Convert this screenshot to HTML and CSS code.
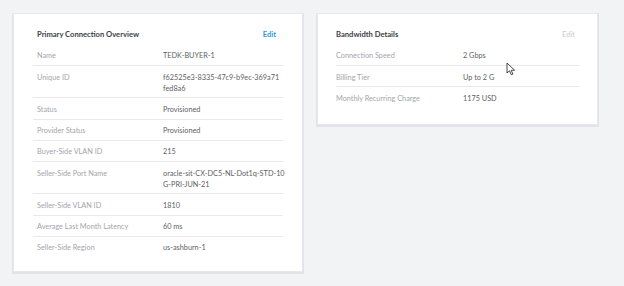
FILE: index.html
```html
<!DOCTYPE html>
<html lang="en">
<head>
    <meta charset="UTF-8">
    <title>Connection Details</title>
    <link rel="stylesheet" href="styles.css">
</head>
<body>
    <div class="cards">
        <div class="card card-primary">
            <div class="card-head">
                <h2>Primary Connection Overview</h2>
                <a href="#" class="edit">Edit</a>
            </div>
            <div class="row"><span class="label">Name</span><span class="value">TEDK-BUYER-1</span></div>
            <div class="row"><span class="label">Unique ID</span><span class="value">f62525e3-8335-47c9-b9ec-369a71 fed8a6</span></div>
            <div class="row"><span class="label">Status</span><span class="value">Provisioned</span></div>
            <div class="row"><span class="label">Provider Status</span><span class="value">Provisioned</span></div>
            <div class="row"><span class="label">Buyer-Side VLAN ID</span><span class="value">215</span></div>
            <div class="row"><span class="label">Seller-Side Port Name</span><span class="value break">oracle-sit-CX-DC5-NL-Dot1q-STD-10G-PRI-JUN-21</span></div>
            <div class="row"><span class="label">Seller-Side VLAN ID</span><span class="value">1810</span></div>
            <div class="row"><span class="label">Average Last Month Latency</span><span class="value">60 ms</span></div>
            <div class="row"><span class="label">Seller-Side Region</span><span class="value">us-ashburn-1</span></div>
        </div>

        <div class="card card-bandwidth">
            <div class="card-head">
                <h2>Bandwidth Details</h2>
                <span class="edit disabled">Edit</span>
            </div>
            <div class="row"><span class="label">Connection Speed</span><span class="value">2 Gbps</span></div>
            <div class="row"><span class="label">Billing Tier</span><span class="value">Up to 2 G</span></div>
            <div class="row"><span class="label">Monthly Recurring Charge</span><span class="value">1175 USD</span></div>
        </div>
    </div>

    <!-- mouse pointer caught in the screenshot -->
    <svg class="pointer" width="10" height="14" viewBox="0 0 10 14">
        <path d="M1 1 L1 11 L3.5 8.8 L5.3 12.8 L6.9 12.1 L5.2 8.3 L8.6 8.2 Z" fill="#fff" stroke="#333" stroke-width="0.9" stroke-linejoin="round"/>
    </svg>
</body>
</html>
```

FILE: styles.css
```css
* {
    margin: 0;
    padding: 0;
    box-sizing: border-box;
}
body {
    font-family: 'Lato', 'Liberation Sans', sans-serif;
    background: #f2f3f5;
    color: #5a5d62;
    width: 624px;
    height: 286px;
    overflow: hidden;
    position: relative;
    -webkit-font-smoothing: antialiased;
}
.cards {
    display: flex;
    align-items: flex-start;
    gap: 14px;
    padding: 13px 0 0 13px;
}
.card {
    background: #fff;
    border: 1px solid #e6e8ec;
    box-shadow: 0 1px 0 1px #e1e3e9;
    padding: 12px 19px 12px;
}
.card-primary {
    width: 290px;
    height: 259px;
}
.card-bandwidth {
    width: 281px;
    height: 112px;
    padding: 12px 18px 14px;
}
.card-head {
    display: flex;
    justify-content: space-between;
    align-items: center;
    height: 16px;
    margin-bottom: 2.75px;
    padding: 0 7px 0 4px;
}
.card-bandwidth .card-head {
    padding: 0 4px 0 0;
}
h2 {
    font-size: 7.6px;
    font-weight: 700;
    color: #3b3e44;
}
.edit {
    font-size: 7.6px;
    font-weight: 700;
    color: #2b9be3;
    text-decoration: none;
}
.edit.disabled {
    font-weight: 400;
    color: #c9cbcf;
}
.row {
    display: flex;
    font-size: 7.3px;
    line-height: 11px;
    padding: 5.5px 0 3.75px 4px;
    border-bottom: 1px solid #e8e9ec;
}
.row:last-child {
    border-bottom: none;
}
.card-bandwidth .row {
    padding-left: 0;
}
.label {
    width: 126px;
    flex-shrink: 0;
    color: #a3a6ab;
}
.card-bandwidth .label {
    width: 127px;
}
.value {
    width: 125px;
    flex-shrink: 0;
    color: #5c5f64;
}
.value.break {
    word-break: break-all;
}
.pointer {
    position: absolute;
    left: 506px;
    top: 62px;
}
```
